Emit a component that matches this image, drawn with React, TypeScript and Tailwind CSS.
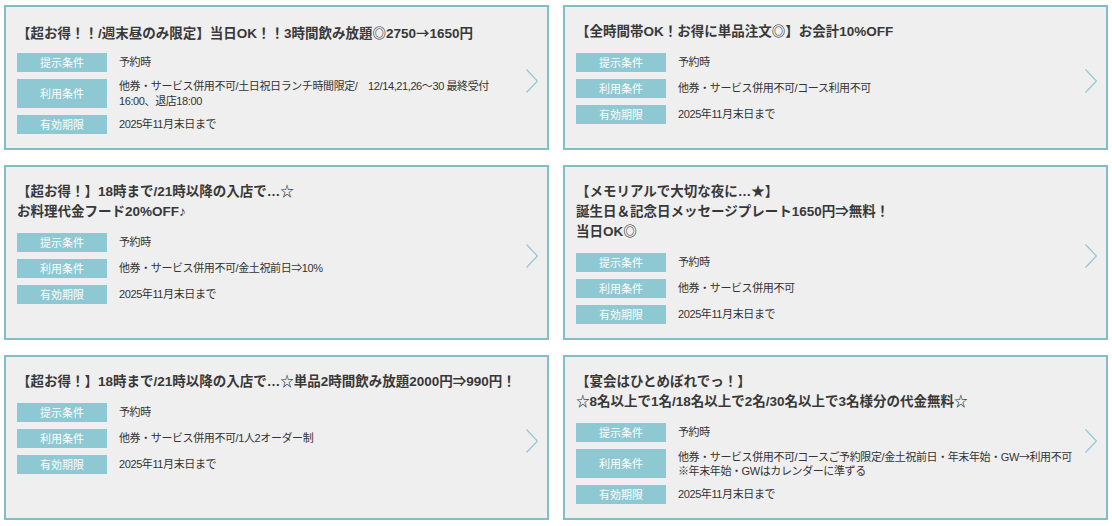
import { memo, type ReactNode } from "react";

interface Coupon {
  id: string;
  title: string[];
  present: string[];
  usage: string[];
  expiry: string[];
}

const COUPONS: Coupon[] = [
  {
    id: "c1",
    title: ["【超お得！！/週末昼のみ限定】当日OK！！3時間飲み放題◎2750→1650円"],
    present: ["予約時"],
    usage: ["他券・サービス併用不可/土日祝日ランチ時間限定/　12/14,21,26〜30 最終受付", "16:00、退店18:00"],
    expiry: ["2025年11月末日まで"],
  },
  {
    id: "c2",
    title: ["【全時間帯OK！お得に単品注文◎】お会計10%OFF"],
    present: ["予約時"],
    usage: ["他券・サービス併用不可/コース利用不可"],
    expiry: ["2025年11月末日まで"],
  },
  {
    id: "c3",
    title: ["【超お得！】18時まで/21時以降の入店で…☆", "お料理代金フード20%OFF♪"],
    present: ["予約時"],
    usage: ["他券・サービス併用不可/金土祝前日⇒10%"],
    expiry: ["2025年11月末日まで"],
  },
  {
    id: "c4",
    title: ["【メモリアルで大切な夜に…★】", "誕生日＆記念日メッセージプレート1650円⇒無料！", "当日OK◎"],
    present: ["予約時"],
    usage: ["他券・サービス併用不可"],
    expiry: ["2025年11月末日まで"],
  },
  {
    id: "c5",
    title: ["【超お得！】18時まで/21時以降の入店で…☆単品2時間飲み放題2000円⇒990円！"],
    present: ["予約時"],
    usage: ["他券・サービス併用不可/1人2オーダー制"],
    expiry: ["2025年11月末日まで"],
  },
  {
    id: "c6",
    title: ["【宴会はひとめぼれでっ！】", "☆8名以上で1名/18名以上で2名/30名以上で3名様分の代金無料☆"],
    present: ["予約時"],
    usage: ["他券・サービス併用不可/コースご予約限定/金土祝前日・年末年始・GW→利用不可", "※年末年始・GWはカレンダーに準ずる"],
    expiry: ["2025年11月末日まで"],
  },
];

const FONT = "[font-family:'Liberation_Sans','Noto_Sans_CJK_JP',sans-serif]";

// the arrow should come from the CJK font (wide), not Liberation's small one
function withArrows(text: string): ReactNode {
  const parts = text.split("→");
  return parts.map((p, i) => (
    <span key={i}>
      {p}
      {i < parts.length - 1 && <span className="[font-family:'Noto_Sans_CJK_JP',sans-serif]">→</span>}
    </span>
  ));
}

function Row({ label, lines }: { label: string; lines: string[] }) {
  return (
    <div className="flex items-stretch gap-[12px]">
      <div className="w-[90px] shrink-0 min-h-[19px] bg-[#8ec8d2] text-white text-[11px] leading-[14px] flex items-center justify-center">
        {label}
      </div>
      <div className="self-center text-[11px] leading-[14.5px] tracking-[-0.4px] text-[#333]">
        {lines.map((l, i) => (
          <div key={i} className="h-[14.5px] whitespace-pre">
            {withArrows(l)}
          </div>
        ))}
      </div>
    </div>
  );
}

const CouponCard = memo(function CouponCard({ coupon }: { coupon: Coupon }) {
  return (
    <div className="flex border-2 border-[#80bec8] bg-[#efefef]">
      <div className="flex-1 min-w-0 pl-[11px] pt-[15px] pb-[14px]">
        {/* Title */}
        <div className="text-[13.5px] leading-[20px] font-bold text-[#383838] mb-[11px]">
          {coupon.title.map((t, i) => (
            <div key={i} className="h-[20px] whitespace-nowrap">
              {withArrows(t)}
            </div>
          ))}
        </div>

        {/* Conditions */}
        <div className="flex flex-col gap-[7px]">
          <Row label="提示条件" lines={coupon.present} />
          <Row label="利用条件" lines={coupon.usage} />
          <Row label="有効期限" lines={coupon.expiry} />
        </div>
      </div>

      {/* Chevron */}
      <div className="w-[12px] shrink-0 ml-[4px] mr-[9px] flex items-center pt-[7px]">
        <svg width="12" height="24" viewBox="0 0 12 24" fill="none">
          <path d="M0.5 0.5L11.5 12L0.5 23.5" stroke="#8ec8d2" strokeWidth="1.2" />
        </svg>
      </div>
    </div>
  );
});

export default function App() {
  return (
    <div className={`${FONT} bg-white w-[1112px] min-h-[526px] px-[4px] pt-[5px] pb-[8px]`}>
      <div className="grid grid-cols-2 gap-x-[14px] gap-y-[15px]">
        {COUPONS.map((c) => (
          <CouponCard key={c.id} coupon={c} />
        ))}
      </div>
    </div>
  );
}
